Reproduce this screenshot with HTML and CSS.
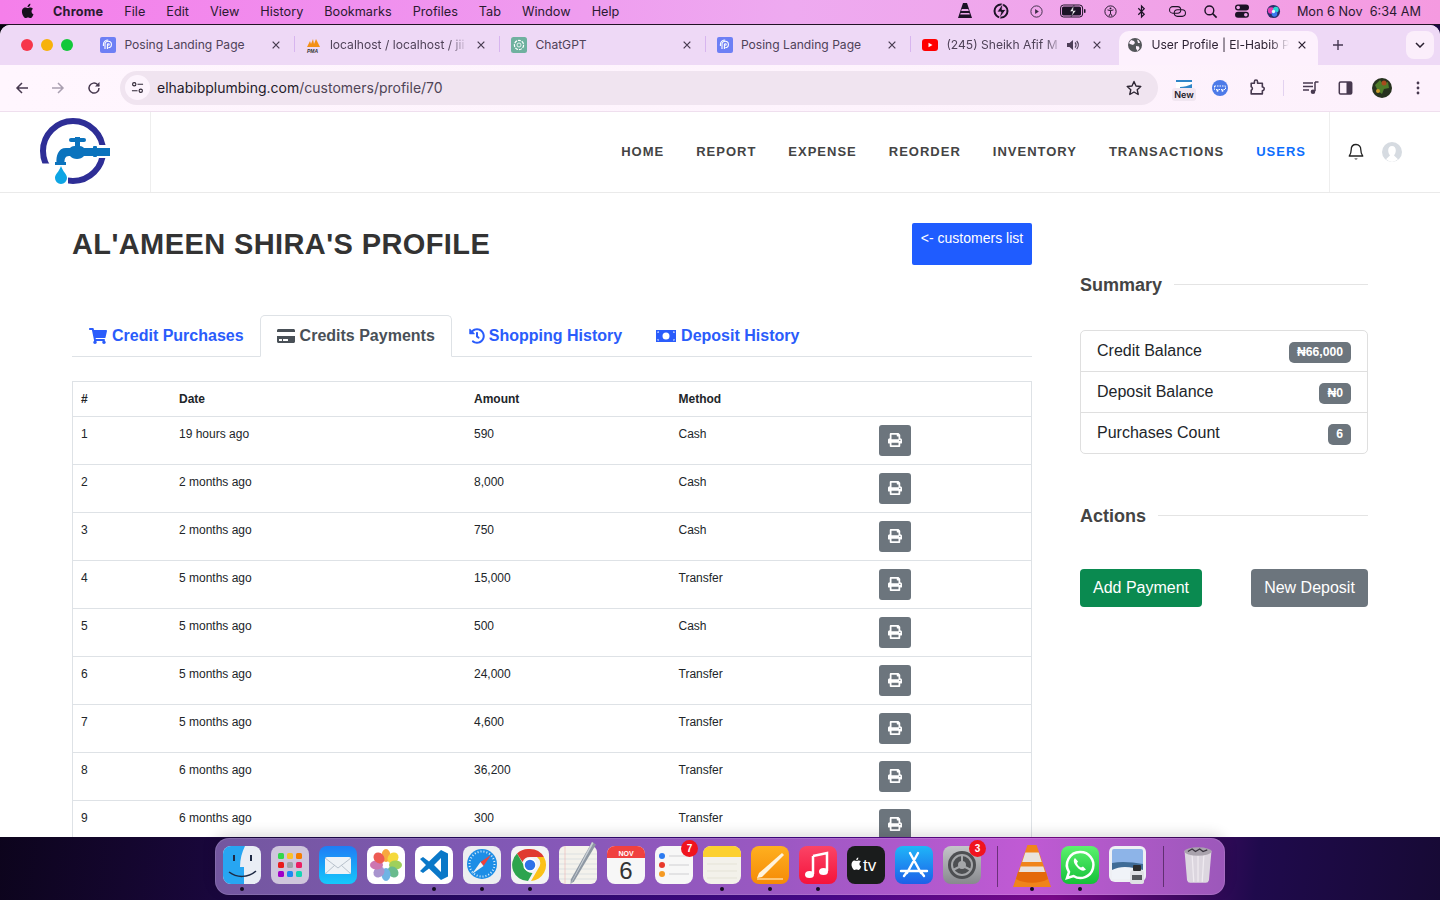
FILE: index.html
```html
<!DOCTYPE html>
<html lang="en">
<head>
<meta charset="utf-8">
<title>User Profile | El-Habib Plumbing</title>
<link rel="stylesheet" href="styles.css">
</head>
<body>
<svg class="defs" width="0" height="0" aria-hidden="true">
  <defs>
    <symbol id="i-print" viewBox="0 0 512 512"><path d="M448 192V77.25c0-8.49-3.37-16.62-9.37-22.63L393.37 9.37c-6-6-14.14-9.37-22.63-9.37H96C78.33 0 64 14.33 64 32v160c-35.35 0-64 28.65-64 64v112c0 8.84 7.16 16 16 16h48v96c0 17.67 14.33 32 32 32h320c17.67 0 32-14.33 32-32v-96h48c8.84 0 16-7.16 16-16V256c0-35.35-28.65-64-64-64zm-64 256H128v-96h256v96zm0-224H128V64h192v48c0 8.84 7.16 16 16 16h48v96zm48 72c-13.25 0-24-10.75-24-24 0-13.26 10.75-24 24-24s24 10.74 24 24c0 13.25-10.75 24-24 24z"/></symbol>
    <symbol id="i-close" viewBox="0 0 12 12"><path d="M2 2l8 8M10 2l-8 8" stroke="currentColor" stroke-width="1.5" fill="none"/></symbol>
    <symbol id="i-posing" viewBox="0 0 16 16"><rect width="16" height="16" rx="2" fill="#6d7ff5"/><path d="M5 12V7.5a3.2 3.2 0 1 1 3.2 3.2M7.4 12V7.6a.9.9 0 1 1 .9.9M3.4 9V7.4A4.8 4.8 0 0 1 8.200 3" fill="none" stroke="#fff" stroke-width="1.100"/></symbol>
  </defs>
</svg>

<header class="menubar">
  <div class="menu-left">
    <svg class="apple" viewBox="0 0 14 16"><path d="M11.500 8.500c0-1.800 1.500-2.600 1.500-2.700-.8-1.200-2.100-1.400-2.600-1.400-1.100-.1-2.100.6-2.700.6-.6 0-1.400-.6-2.300-.6-1.200 0-2.300.7-2.900 1.700-1.300 2.200-.3 5.400.9 7.200.6.900 1.300 1.800 2.300 1.800.9 0 1.200-.6 2.300-.6 1.100 0 1.400.6 2.300.6 1 0 1.600-.9 2.200-1.700.7-1 1-2 1-2.100 0 0-2-.7-2-2.800zM9.700 3.100c.5-.6.800-1.400.7-2.300-.7 0-1.600.5-2.100 1.100-.5.500-.9 1.400-.8 2.200.8.100 1.700-.4 2.200-1z"/></svg>
    <b>Chrome</b><span>File</span><span>Edit</span><span>View</span><span>History</span><span>Bookmarks</span><span>Profiles</span><span>Tab</span><span>Window</span><span>Help</span>
  </div>
  <div class="menu-right">
    <svg class="st st-cone" viewBox="0 0 18 18"><path d="M7 1h4l5 15H2z" fill="#1c1226"/><path d="M5.800 7h6.400l.6 2H5.200zM4.700 11h8.600l.5 1.500H4.200z" fill="#eba6ea"/></svg>
    <svg class="st st-bolt" viewBox="0 0 18 18"><circle cx="9" cy="9" r="6.500" fill="none" stroke="#1c1226" stroke-width="2"/><path d="M11 1L5 10h4l-2 7 7-9.500h-4z" fill="#1c1226" stroke="#efa5ea" stroke-width=".8"/></svg>
    <svg class="st st-play" viewBox="0 0 16 16"><circle cx="8" cy="8" r="6" fill="none" stroke="#3a2c44" stroke-width="1"/><path d="M6.500 5.300l4 2.700-4 2.700z" fill="#3a2c44"/></svg>
    <svg class="st st-batt" viewBox="0 0 26 14"><rect x=".6" y="1" width="22" height="12" rx="3" fill="none" stroke="#1c1226"/><rect x="2" y="2.500" width="19" height="9" rx="1.500" fill="#1c1226"/><path d="M14 1l-4 6.500h3L11 13l5-6.500h-3z" fill="#fff" stroke="#1c1226" stroke-width=".5"/><rect x="24" y="5" width="1.500" height="4" rx=".7" fill="#1c1226"/></svg>
    <svg class="st st-acc" viewBox="0 0 16 16"><circle cx="8" cy="8" r="6" fill="none" stroke="#1c1226"/><circle cx="8" cy="4.700" r="1" fill="#1c1226"/><path d="M4.800 6.300L8 7l3.200-.7M8 7v3M8 10l-1.700 2.800M8 10l1.700 2.800" fill="none" stroke="#1c1226"/></svg>
    <svg class="st st-bt" viewBox="0 0 12 16"><path d="M2.500 4.500l6.500 6.500-3 3V2l3 3-6.500 6.500" fill="none" stroke="#1c1226" stroke-width="1.300"/></svg>
    <svg class="st st-link" viewBox="0 0 20 16"><rect x="1.500" y="2.800" width="12" height="7" rx="3.500" fill="none" stroke="#1c1226" stroke-width="1.100"/><rect x="6.500" y="6.200" width="12" height="7" rx="3.500" fill="none" stroke="#1c1226" stroke-width="1.100"/></svg>
    <svg class="st st-search" viewBox="0 0 16 16"><circle cx="6.800" cy="6.800" r="4.700" fill="none" stroke="#1c1226" stroke-width="1.500"/><path d="M10.300 10.300L14.500 14.500" stroke="#1c1226" stroke-width="1.700"/></svg>
    <svg class="st st-cc" viewBox="0 0 16 16"><rect x="1" y="1.500" width="14" height="6" rx="3" fill="#1c1226"/><rect x="1" y="8.800" width="14" height="6" rx="3" fill="#1c1226"/><circle cx="4.200" cy="4.500" r="1.800" fill="#efa5ea"/><circle cx="11.800" cy="11.800" r="1.800" fill="#efa5ea"/></svg>
    <svg class="st st-siri" viewBox="0 0 16 16"><circle cx="8" cy="8" r="7" fill="#29306b"/><circle cx="5.500" cy="7" r="3.500" fill="#e63bb3"/><circle cx="10.500" cy="6" r="3" fill="#2dd6d3"/><circle cx="9" cy="10.500" r="3" fill="#3a78f0"/><circle cx="8" cy="8" r="1.800" fill="#dff"/></svg>
    <span class="clock">Mon 6 Nov&nbsp; 6:34 AM</span>
  </div>
</header>

<div class="window">
  <div class="tabstrip">
    <div class="lights"><i class="l-red"></i><i class="l-yellow"></i><i class="l-green"></i></div>
    <div class="tab">
      <svg class="fav"><use href="#i-posing"/></svg>
      <span class="tab-title">Posing Landing Page</span>
      <svg class="tab-x"><use href="#i-close"/></svg>
    </div>
    <div class="tab">
      <svg class="fav" viewBox="0 0 16 16"><path d="M1 10L4 4l1 3 2-5 1 5 2-5 2 4 2 4z" fill="#f39016"/><text x="1" y="15.500" class="pma">PMA</text></svg>
      <span class="tab-title tab-fade">localhost / localhost / jii</span>
      <svg class="tab-x"><use href="#i-close"/></svg>
    </div>
    <div class="tab">
      <svg class="fav" viewBox="0 0 16 16"><rect width="16" height="16" rx="2.500" fill="#6fb19f"/><circle cx="8" cy="8" r="4.600" fill="none" stroke="#fff" stroke-width="1.200" stroke-dasharray="3 1"/><circle cx="8" cy="8" r="2" fill="none" stroke="#fff" stroke-width=".8"/></svg>
      <span class="tab-title">ChatGPT</span>
      <svg class="tab-x"><use href="#i-close"/></svg>
    </div>
    <div class="tab">
      <svg class="fav"><use href="#i-posing"/></svg>
      <span class="tab-title">Posing Landing Page</span>
      <svg class="tab-x"><use href="#i-close"/></svg>
    </div>
    <div class="tab tab-last">
      <svg class="fav" viewBox="0 0 16 16"><rect y="2" width="16" height="12" rx="3" fill="#f00"/><path d="M6.500 5.800L10.500 8l-4 2.200z" fill="#fff"/></svg>
      <span class="tab-title tab-fade">(245) Sheikh Afif M</span>
      <svg class="speaker" viewBox="0 0 14 14"><path d="M1 5h2.500L7 2v10L3.500 9H1z" fill="#4c3e57"/><path d="M9 4.500a3.500 3.500 0 0 1 0 5M10.700 3a6 6 0 0 1 0 8" fill="none" stroke="#4c3e57" stroke-width="1.200"/></svg>
      <svg class="tab-x"><use href="#i-close"/></svg>
    </div>
    <div class="tab-active">
      <svg class="globe" viewBox="0 0 14 14"><circle cx="7" cy="7" r="7" fill="#535559"/><path d="M3 2l3 1 1 2-2 2-3-1-1-1zM8 8l3 .5.500 2-2 2.500-1.500-2.500zM9 1.500l2 1 1 2.500-2 0z" fill="#fdf0fd"/></svg>
      <span class="tab-title tab-fade">User Profile | El-Habib P</span>
      <svg class="tab-x tab-x-active"><use href="#i-close"/></svg>
    </div>
    <svg class="plus" viewBox="0 0 12 12"><path d="M6 1v10M1 6h10" stroke="#453852" stroke-width="1.400"/></svg>
    <div class="tab-search"><svg viewBox="0 0 10 6"><path d="M1 1l4 4 4-4" fill="none" stroke="#2a2030" stroke-width="1.500"/></svg></div>
  </div>

  <div class="toolbar">
    <svg class="tb tb-back" viewBox="0 0 14 14"><path d="M13 7H2M7 2L2 7l5 5" fill="none" stroke="#47394f" stroke-width="1.500"/></svg>
    <svg class="tb tb-fwd" viewBox="0 0 14 14"><path d="M1 7h11M7 2l5 5-5 5" fill="none" stroke="#a99fb0" stroke-width="1.500"/></svg>
    <svg class="tb tb-reload" viewBox="0 0 14 14"><path d="M12 7a5 5 0 1 1-1.500-3.500L12 5" fill="none" stroke="#47394f" stroke-width="1.500"/><path d="M12.500 1v4.500H8z" fill="#47394f"/></svg>
    <div class="omnibox">
      <div class="site-info"><svg viewBox="0 0 14 14"><circle cx="3.500" cy="3.500" r="1.800" fill="none" stroke="#2e2634" stroke-width="1.200"/><path d="M7 3.500h6M1 10.500h6" stroke="#2e2634" stroke-width="1.300"/><circle cx="10.500" cy="10.500" r="1.800" fill="none" stroke="#2e2634" stroke-width="1.200"/></svg></div>
      <span class="url"><span class="url-host">elhabibplumbing.com</span><span class="url-path">/customers/profile/70</span></span>
      <svg class="star" viewBox="0 0 16 16"><path d="M8 1.500l2 4.500 4.800.5-3.600 3.200 1 4.800L8 12l-4.200 2.500 1-4.800L1.200 6.500 6 6z" fill="none" stroke="#2e2634" stroke-width="1.400" stroke-linejoin="round"/></svg>
    </div>
    <div class="ext-new"><svg viewBox="0 0 16 9"><rect width="16" height="9" fill="#fff"/><path d="M0 0h16v2H0zM4 7c4 0 8-1 12-3v5H4z" fill="#2f86c8"/></svg><span>New</span></div>
    <svg class="tb tb-ext" viewBox="0 0 16 16"><circle cx="8" cy="8" r="8" fill="#4d7be8"/><path d="M2.500 6h11v3.500h-11z" fill="none" stroke="#fff" stroke-dasharray="1.500 1"/><circle cx="5.500" cy="10.800" r="1" fill="#fff"/><circle cx="10.500" cy="10.800" r="1" fill="#fff"/></svg>
    <svg class="tb tb-puzzle" viewBox="0 0 16 16"><path d="M6 2.500a1.500 1.500 0 0 1 3 0V4h4.500v3.500a1.600 1.600 0 0 1 0 3.500v3H3v-3.500a1.700 1.700 0 0 0 0-3.200V4h3z" fill="none" stroke="#47394f" stroke-width="1.500" stroke-linejoin="round"/></svg>
    <i class="tb-sep"></i>
    <svg class="tb tb-media" viewBox="0 0 16 14"><path d="M0 2h10M0 5.500h10M0 9h6" stroke="#47394f" stroke-width="1.300"/><path d="M12 1v9" stroke="#47394f" stroke-width="1.500"/><path d="M12 1h3.500" stroke="#47394f" stroke-width="1.500"/><circle cx="10" cy="10.800" r="2.300" fill="#47394f"/></svg>
    <svg class="tb tb-side" viewBox="0 0 14 14"><rect x=".8" y="1" width="12.400" height="12" rx="1.300" fill="none" stroke="#47394f" stroke-width="1.500"/><rect x="8" y="1" width="5" height="12" fill="#47394f"/></svg>
    <svg class="tb-avatar" viewBox="0 0 20 20"><circle cx="10" cy="10" r="10" fill="#27321f"/><path d="M3 7l5-5 3 4 5-2 1 6-5 1-2 5-4-3z" fill="#4f7c2a"/><circle cx="12" cy="5" r="2.500" fill="#a84a1e"/><circle cx="6" cy="13" r="2" fill="#c89a2a"/></svg>
    <svg class="tb tb-more" viewBox="0 0 4 14"><circle cx="2" cy="2" r="1.400" fill="#47394f"/><circle cx="2" cy="7" r="1.400" fill="#47394f"/><circle cx="2" cy="12" r="1.400" fill="#47394f"/></svg>
  </div>

  <div class="page">
    <nav class="site-nav">
      <div class="brand">
        <svg class="logo" viewBox="0 0 150 80">
          <circle cx="73" cy="39" r="30" fill="none" stroke="#2e2e96" stroke-width="6"/>
          <rect x="40" y="51.500" width="28" height="21" fill="#fff"/>
          <rect x="98" y="33" width="14" height="13" fill="#fff"/>
          <rect x="69" y="26" width="17" height="4" rx="2" fill="#0b73bd"/>
          <rect x="75" y="25" width="5" height="13" fill="#0b73bd"/>
          <path d="M110 36H84c-2-3-12-3-14 0h-4c-8 0-10 8-9.500 15h8c0-4 .5-7 4.500-7h1c3 4 11 4 14 0h26z" fill="#0b73bd"/>
          <rect x="93" y="34" width="4" height="11" rx="1" fill="#0b73bd"/>
          <rect x="55" y="50" width="11" height="3" fill="#0b73bd"/>
          <path d="M61 54c2 6 6 8 6 12a6 6 0 0 1-12 0c0-4 4-6 6-12z" fill="#0ea5e4"/>
        </svg>
      </div>
      <ul class="nav-links">
        <li>HOME</li><li>REPORT</li><li>EXPENSE</li><li>REORDER</li><li>INVENTORY</li><li>TRANSACTIONS</li><li class="nav-active">USERS</li>
      </ul>
      <div class="nav-user">
        <svg class="bell" viewBox="0 0 16 18"><path d="M8 1.500c-3 0-4.800 2.200-4.800 5.200 0 3.500-1 4.800-2 6.300h13.600c-1-1.500-2-2.800-2-6.300 0-3-1.800-5.200-4.800-5.200z" fill="none" stroke="#222" stroke-width="1.300" stroke-linejoin="round"/><path d="M6.300 15.500a2 2 0 0 0 3.400 0z" fill="#222"/></svg>
        <svg class="user" viewBox="0 0 20 20"><circle cx="10" cy="10" r="10" fill="#d6dbe1"/><path d="M10 4c2.500 0 3.800 2 3.800 4.500 0 2-1 4-1.800 5l4 3.800A10 10 0 0 1 10 20a10 10 0 0 1-6-2.700l4-3.800c-.8-1-1.800-3-1.800-5C6.200 6 7.500 4 10 4z" fill="#fff"/></svg>
      </div>
    </nav>

    <main class="content">
      <section class="main-col">
        <div class="title-row">
          <h1>AL'AMEEN SHIRA'S PROFILE</h1>
          <a class="btn-list">&lt;- customers list</a>
        </div>
        <div class="tabs">
          <a class="ptab ptab-first"><svg class="pi pi-cart" viewBox="0 0 576 512"><path d="M528.12 301.319l47.273-208C578.806 78.301 567.391 64 551.99 64H159.208l-9.166-44.81C147.758 8.021 137.93 0 126.529 0H24C10.745 0 0 10.745 0 24v16c0 13.255 10.745 24 24 24h69.883l70.248 343.435C147.325 417.1 136 435.222 136 456c0 30.928 25.072 56 56 56s56-25.072 56-56c0-15.674-6.447-29.835-16.824-40h209.647C430.447 426.165 424 440.326 424 456c0 30.928 25.072 56 56 56s56-25.072 56-56c0-22.172-12.888-41.332-31.579-50.405l5.517-24.276c3.413-15.018-8.002-29.319-23.403-29.319H218.117l-6.545-32h293.145c11.206 0 20.92-7.754 23.403-18.681z"/></svg>Credit Purchases</a>
          <a class="ptab ptab-active"><svg class="pi pi-card" viewBox="0 0 576 512"><path d="M0 432c0 26.500 21.500 48 48 48h480c26.500 0 48-21.500 48-48V256H0v176zm192-68c0-6.600 5.400-12 12-12h136c6.600 0 12 5.400 12 12v40c0 6.600-5.400 12-12 12H204c-6.600 0-12-5.400-12-12v-40zm-128 0c0-6.600 5.400-12 12-12h72c6.600 0 12 5.400 12 12v40c0 6.600-5.400 12-12 12H76c-6.600 0-12-5.400-12-12v-40zM576 80v48H0V80c0-26.500 21.500-48 48-48h480c26.500 0 48 21.500 48 48z"/></svg>Credits Payments</a>
          <a class="ptab"><svg class="pi pi-hist" viewBox="0 0 512 512"><path d="M504 255.531c.253 136.640-111.180 248.372-247.820 248.468-59.015.042-113.223-20.530-155.822-54.911-11.077-8.940-11.905-25.541-1.839-35.607l11.267-11.267c8.609-8.609 22.353-9.551 31.891-1.984C173.062 425.135 212.781 440 256 440c101.705 0 184-82.311 184-184 0-101.705-82.311-184-184-184-48.814 0-93.149 18.969-126.068 49.932l50.754 50.754c10.080 10.080 2.941 27.314-11.313 27.314H24c-8.837 0-16-7.163-16-16V38.627c0-14.254 17.234-21.393 27.314-11.314l49.372 49.372C129.209 34.136 189.552 8 256 8c136.810 0 247.747 110.780 248 247.531zm-180.912 78.784l9.823-12.630c8.138-10.463 6.253-25.542-4.210-33.679L288 256.349V152c0-13.255-10.745-24-24-24h-16c-13.255 0-24 10.745-24 24v135.651l65.409 50.874c10.463 8.137 25.541 6.253 33.679-4.210z"/></svg>Shopping History</a>
          <a class="ptab"><svg class="pi pi-money" viewBox="0 0 20 14"><path fill-rule="evenodd" d="M0 1h20v12H0zM10 3.500a3.500 3.500 0 1 0 0 7 3.500 3.500 0 0 0 0-7zM1.500 2.500v1.500a1.500 1.500 0 0 0 1.500-1.500zM17 2.500a1.500 1.500 0 0 0 1.500 1.500V2.500zM1.500 10v1.500H3A1.500 1.500 0 0 0 1.500 10zM18.500 10A1.500 1.500 0 0 0 17 11.500h1.500z"/></svg>Deposit History</a>
        </div>
        <div class="table-wrap">
          <table class="pay-table">
            <colgroup><col class="c-num"><col class="c-date"><col class="c-amt"><col class="c-meth"><col></colgroup>
            <thead><tr><th>#</th><th>Date</th><th>Amount</th><th>Method</th><th></th></tr></thead>
            <tbody>
              <tr><td>1</td><td>19 hours ago</td><td>590</td><td>Cash</td><td><a class="btn-print"><svg><use href="#i-print"/></svg></a></td></tr>
              <tr><td>2</td><td>2 months ago</td><td>8,000</td><td>Cash</td><td><a class="btn-print"><svg><use href="#i-print"/></svg></a></td></tr>
              <tr><td>3</td><td>2 months ago</td><td>750</td><td>Cash</td><td><a class="btn-print"><svg><use href="#i-print"/></svg></a></td></tr>
              <tr><td>4</td><td>5 months ago</td><td>15,000</td><td>Transfer</td><td><a class="btn-print"><svg><use href="#i-print"/></svg></a></td></tr>
              <tr><td>5</td><td>5 months ago</td><td>500</td><td>Cash</td><td><a class="btn-print"><svg><use href="#i-print"/></svg></a></td></tr>
              <tr><td>6</td><td>5 months ago</td><td>24,000</td><td>Transfer</td><td><a class="btn-print"><svg><use href="#i-print"/></svg></a></td></tr>
              <tr><td>7</td><td>5 months ago</td><td>4,600</td><td>Transfer</td><td><a class="btn-print"><svg><use href="#i-print"/></svg></a></td></tr>
              <tr><td>8</td><td>6 months ago</td><td>36,200</td><td>Transfer</td><td><a class="btn-print"><svg><use href="#i-print"/></svg></a></td></tr>
              <tr><td>9</td><td>6 months ago</td><td>300</td><td>Transfer</td><td><a class="btn-print"><svg><use href="#i-print"/></svg></a></td></tr>
            </tbody>
          </table>
        </div>
      </section>

      <aside class="side-col">
        <h2 class="side-head side-head-summary"><span>Summary</span><i></i></h2>
        <ul class="summary">
          <li><span>Credit Balance</span><b class="badge">₦66,000</b></li>
          <li><span>Deposit Balance</span><b class="badge">₦0</b></li>
          <li><span>Purchases Count</span><b class="badge">6</b></li>
        </ul>
        <h2 class="side-head side-head-actions"><span>Actions</span><i></i></h2>
        <div class="actions">
          <a class="btn-action btn-green">Add Payment</a>
          <a class="btn-action btn-gray">New Deposit</a>
        </div>
      </aside>
    </main>
  </div>
</div>

<footer class="dock">
  <div class="app dot"><svg viewBox="0 0 38 38"><rect width="38" height="38" rx="8" fill="#e9eef5"/><path d="M8 0h14c-3 6-5 13-5 21h4v17H8a8 8 0 0 1-8-8V8a8 8 0 0 1 8-8z" fill="#27a6f2"/><path d="M11 9v6M28 9v6" stroke="#1d2a44" stroke-width="2"/><path d="M6 26c8 6 19 6 27-1" fill="none" stroke="#1d2a44" stroke-width="1.500"/></svg></div>
  <div class="app"><svg viewBox="0 0 38 38"><rect width="38" height="38" rx="8" fill="#cfc6dc"/><g><rect x="7" y="7" width="6" height="6" rx="1.500" fill="#32d74b"/><rect x="16" y="7" width="6" height="6" rx="1.500" fill="#fbc02d"/><rect x="25" y="7" width="6" height="6" rx="1.500" fill="#f57c00"/><rect x="7" y="16" width="6" height="6" rx="1.500" fill="#e81c1c"/><rect x="16" y="16" width="6" height="6" rx="1.500" fill="#9ea3a8"/><rect x="25" y="16" width="6" height="6" rx="1.500" fill="#ea1e63"/><rect x="7" y="25" width="6" height="6" rx="1.500" fill="#a000c8"/><rect x="16" y="25" width="6" height="6" rx="1.500" fill="#1e88f0"/><rect x="25" y="25" width="6" height="6" rx="1.500" fill="#14d4b4"/></g></svg></div>
  <div class="app"><svg viewBox="0 0 38 38"><defs><linearGradient id="g-mail" x1="0" y1="0" x2="0" y2="1"><stop offset="0" stop-color="#1f7cf5"/><stop offset="1" stop-color="#16c8fb"/></linearGradient></defs><rect width="38" height="38" rx="8" fill="url(#g-mail)"/><rect x="6" y="11" width="26" height="17" rx="2" fill="#eef2f6"/><path d="M6 12l13 10 13-10M6 28l10-9M32 28l-10-9" fill="none" stroke="#b9c2cc"/></svg></div>
  <div class="app"><svg viewBox="0 0 38 38"><rect width="38" height="38" rx="8" fill="#fff"/><g opacity=".85"><ellipse cx="19" cy="9.500" rx="4.500" ry="6.500" fill="#f79a1e"/><ellipse cx="26" cy="12" rx="5" ry="6" fill="#f4d31b" transform="rotate(45 26 12)"/><ellipse cx="28.500" cy="19" rx="6.500" ry="4.500" fill="#8fc83f"/><ellipse cx="26" cy="26" rx="5" ry="6" fill="#4fb07a" transform="rotate(-45 26 26)"/><ellipse cx="19" cy="28.500" rx="4.500" ry="6.500" fill="#56a8e0"/><ellipse cx="12" cy="26" rx="5" ry="6" fill="#9a82c6" transform="rotate(45 12 26)"/><ellipse cx="9.500" cy="19" rx="6.500" ry="4.500" fill="#c55fa4"/><ellipse cx="12" cy="12" rx="5" ry="6" fill="#ea3f36" transform="rotate(-45 12 12)"/></g></svg></div>
  <div class="app dot"><svg viewBox="0 0 38 38"><rect width="38" height="38" rx="8" fill="#fff"/><path d="M26 4l7 3.500v23L26 34 14 22.500 8 27l-3-2 6-6-6-6 3-2 6 4.500zM26 12l-7 7 7 7z" fill="#0a78c8"/></svg></div>
  <div class="app dot"><svg viewBox="0 0 38 38"><rect width="38" height="38" rx="8" fill="#eceef0"/><circle cx="19" cy="18" r="15" fill="#1d8ee6"/><circle cx="19" cy="18" r="12.500" fill="none" stroke="#d6ecfa" stroke-width="2" stroke-dasharray="1 2"/><path d="M28 9L20.500 20 17.500 16z" fill="#f0413a"/><path d="M9 28l8.500-12 3 4z" fill="#f2f4f6"/></svg></div>
  <div class="app dot"><svg viewBox="0 0 38 38"><rect width="38" height="38" rx="8" fill="#f3f3f4"/><path d="M19 3a16 16 0 0 1 13.900 8H19a8 8 0 0 0-7.500 5L6 7.500A16 16 0 0 1 19 3z" fill="#e03a2f"/><path d="M32.900 11A16 16 0 0 1 20 35l7-12a8 8 0 0 0-1-12z" fill="#fbc116"/><path d="M6 7.500l7 12a8 8 0 0 0 8.500 7.500L17 35A16 16 0 0 1 6 7.500z" fill="#2da44e"/><circle cx="19" cy="19" r="6" fill="#2f72e8" stroke="#fff" stroke-width="1.500"/></svg></div>
  <div class="app"><svg class="notepad" viewBox="0 0 38 42"><rect y="4" width="38" height="38" rx="6" fill="#f4f2ec"/><path d="M0 12h38M0 17h38M0 22h38M0 27h38M0 32h38M0 37h38" stroke="#cfd3dc" stroke-width=".6"/><path d="M6 4v38" stroke="#eeb4b4" stroke-width=".6"/><path d="M33 0l4 2.500-22 37-3.500 2.500.3-4.500z" fill="#8e98a3"/><path d="M33 0l1.500 1L13 40l-1.500 2z" fill="#c9d0d6"/></svg></div>
  <div class="app"><svg viewBox="0 0 38 38"><rect width="38" height="38" rx="8" fill="#f7f7f7"/><path d="M0 12V8a8 8 0 0 1 8-8h22a8 8 0 0 1 8 8v4z" fill="#f0413f"/><text x="19" y="9.500" class="cal-m">NOV</text><text x="19" y="33" class="cal-d">6</text></svg></div>
  <div class="app has-badge"><svg viewBox="0 0 38 38"><rect width="38" height="38" rx="8" fill="#f7f7f7"/><circle cx="7" cy="10" r="3" fill="#2d7bf0"/><circle cx="7" cy="19" r="3" fill="#e8392c"/><circle cx="7" cy="28" r="3" fill="#f59a23"/><path d="M14 10h20M14 19h20M14 28h20" stroke="#cfcfd2"/></svg><b class="dock-badge">7</b></div>
  <div class="app dot"><svg viewBox="0 0 38 38"><rect width="38" height="38" rx="8" fill="#f3f1ea"/><path d="M0 11V8a8 8 0 0 1 8-8h22a8 8 0 0 1 8 8v3z" fill="#fcd02f"/><path d="M4 18h30M4 25h30M4 32h30" stroke="#e0dcd0" stroke-width=".7"/></svg></div>
  <div class="app dot"><svg viewBox="0 0 38 38"><defs><linearGradient id="g-pages" x1="0" y1="0" x2="0" y2="1"><stop offset="0" stop-color="#ffb01f"/><stop offset="1" stop-color="#f58a07"/></linearGradient></defs><rect width="38" height="38" rx="8" fill="url(#g-pages)"/><path d="M31 7l2 2-22 22-5 1 2-5z" fill="#fff3dd"/><path d="M6 33h26" stroke="#ffd79a" stroke-width="1.500"/></svg></div>
  <div class="app dot"><svg viewBox="0 0 38 38"><defs><linearGradient id="g-music" x1="0" y1="0" x2="0" y2="1"><stop offset="0" stop-color="#fb4466"/><stop offset="1" stop-color="#f5133b"/></linearGradient></defs><rect width="38" height="38" rx="8" fill="url(#g-music)"/><path d="M14 10l14-3v18" fill="none" stroke="#fff" stroke-width="2.500"/><path d="M14 10v18" stroke="#fff" stroke-width="2.500"/><ellipse cx="10.500" cy="28.500" rx="4.500" ry="3.500" fill="#fff"/><ellipse cx="24.500" cy="25.500" rx="4.500" ry="3.500" fill="#fff"/></svg></div>
  <div class="app"><svg viewBox="0 0 38 38"><rect width="38" height="38" rx="8" fill="#1a1c1c"/><path d="M13.800 15.300c-.8-.6-1.600-.7-2.100-.7-.9 0-1.500.5-2.200.5-.7 0-1.300-.5-2-.5-1.700 0-3 1.700-3 4 0 2.400 1.700 5.400 3 5.400.6 0 1-.5 2-.5s1.300.5 2 .5c1.200 0 2.300-2 2.700-3.400-2.200-1-2.200-3.700-.4-5.300zM11.300 11.500c-1.100.1-2.200 1.200-2 2.700 1.200.1 2.200-1.100 2-2.700z" fill="#fff"/><text x="16" y="25" class="tv">tv</text></svg></div>
  <div class="app"><svg viewBox="0 0 38 38"><defs><linearGradient id="g-store" x1="0" y1="0" x2="0" y2="1"><stop offset="0" stop-color="#1fb6f8"/><stop offset="1" stop-color="#1d5fe8"/></linearGradient></defs><rect width="38" height="38" rx="8" fill="url(#g-store)"/><path d="M15 7l11 20M23 7L12 27M6 25h26M9 30l3-4M29 30l-3-4" stroke="#fff" stroke-width="2.400" stroke-linecap="round" fill="none"/></svg></div>
  <div class="app has-badge"><svg viewBox="0 0 38 38"><defs><linearGradient id="g-set" x1="0" y1="0" x2="0" y2="1"><stop offset="0" stop-color="#c4c6c9"/><stop offset="1" stop-color="#87898d"/></linearGradient></defs><rect width="38" height="38" rx="8" fill="url(#g-set)"/><circle cx="19" cy="19" r="14" fill="#4d4f52"/><circle cx="19" cy="19" r="10" fill="none" stroke="#a4a6a9" stroke-width="2"/><circle cx="19" cy="19" r="4" fill="#a4a6a9"/><path d="M19 9v7M10 24l6-3M28 24l-6-3" stroke="#a4a6a9" stroke-width="2"/></svg><b class="dock-badge">3</b></div>
  <i class="dock-sep"></i>
  <div class="app dot"><svg class="vlc" viewBox="0 0 38 42"><path d="M14.500 0h9L38 42H0z" fill="#f0841a"/><path d="M12.300 7.500h13.400l3 9.500H9.200zM7.700 21.500h22.600l1.700 5.500H6z" fill="#e9e3dc"/><path d="M5 27h28l2 7c-8 5-24 5-32 0z" fill="#e4690a"/></svg></div>
  <div class="app dot"><svg viewBox="0 0 38 38"><defs><linearGradient id="g-wa" x1="0" y1="0" x2="0" y2="1"><stop offset="0" stop-color="#5cf26e"/><stop offset="1" stop-color="#14c038"/></linearGradient></defs><rect width="38" height="38" rx="8" fill="url(#g-wa)"/><path d="M19 6a13 13 0 0 0-11 20l-2 6 6.500-2A13 13 0 1 0 19 6z" fill="none" stroke="#fff" stroke-width="2.500"/><path d="M14 12c-2 2-1.500 5 2 9s7 4.500 9 2.500l-3-3-2 1c-2-1-3.500-2.500-4-4.500l1-1.500z" fill="#fff"/></svg></div>
  <div class="app"><svg viewBox="0 0 38 38"><rect width="37" height="36" rx="6" fill="#eef0f4"/><rect x="3" y="3" width="31" height="30" rx="2" fill="#8db4e8"/><path d="M3 17c9-2 20-1 31 1v15H3z" fill="#3f6b96"/><path d="M3 24c9-5 20-3 31 0v9H3z" fill="#f0f3f8"/><path d="M21 27c0-2 2-3 3-3v-4h8v4c1 0 3 1 3 3v9c0 1-1 2-2 2H23c-1 0-2-1-2-2z" fill="#dfe1e4"/><rect x="24" y="19" width="8" height="6" rx="1" fill="#2b2c2e"/><rect x="23" y="29" width="10" height="5" fill="#55585c"/></svg></div>
  <i class="dock-sep"></i>
  <div class="app"><svg class="trash" viewBox="0 0 38 44"><path d="M3 5h32l-3 35a4 4 0 0 1-4 3H10a4 4 0 0 1-4-3z" fill="#dcd6df"/><path d="M12 10l2 32M19 10v32M26 10l-2 32" stroke="#efeaf0" stroke-width="1.500"/><ellipse cx="19" cy="6" rx="16" ry="5" fill="#a9a3ad"/><path d="M7 6l5-3 4 3 5-3 4 3 5-2" fill="none" stroke="#3b3640" stroke-width="1.500"/></svg></div>
</footer>
</body>
</html>
```

FILE: styles.css
```css
* { box-sizing: border-box; }
html, body { margin: 0; height: 100%; }
body {
  width: 1440px; height: 900px; overflow: hidden;
  display: flex; flex-direction: column;
  font-family: "Liberation Sans", Arial, sans-serif;
  background: linear-gradient(97deg, #07030f 0%, #14062e 15%, #2a0a6a 40%, #47098a 60%, #7b0a8c 75%, #1f0a4c 88%, #170a35 100%);
}
.defs { position: absolute; }
ul { list-style: none; margin: 0; padding: 0; }

/* macOS menu bar */
.menubar {
  height: 25px; flex: none; display: flex; justify-content: space-between; align-items: center;
  padding: 0 19px 2px 20px;
  border-bottom: 1px solid #221226;
  background: linear-gradient(90deg, #f57fea 0%, #f08fee 25%, #eeaaf0 55%, #f0a5ea 75%, #f59ae0 100%);
  font: 12.700px Inter, "Liberation Sans", sans-serif; color: #2a1a30;
}
.menu-left { display: flex; align-items: center; gap: 21px; }
.menu-left b { font-weight: 700; letter-spacing: .2px; }
.apple { width: 14px; height: 16px; fill: #17101c; margin-right: -2px; }
.menu-right { display: flex; align-items: center; }
.st { flex: none; display: block; }
.st-cone { width: 18px; height: 18px; margin-right: 18px; }
.st-bolt { width: 18px; height: 18px; margin-right: 19px; }
.st-play { width: 15px; height: 15px; margin-right: 16px; }
.st-batt { width: 26px; height: 14px; margin-right: 17px; }
.st-acc { width: 15px; height: 15px; margin-right: 18px; }
.st-bt { width: 11px; height: 15px; margin-right: 21px; }
.st-link { width: 19px; height: 15px; margin-right: 16px; }
.st-search { width: 15px; height: 15px; margin-right: 16px; }
.st-cc { width: 16px; height: 16px; margin-right: 16px; }
.st-siri { width: 15px; height: 15px; margin-right: 16px; }
.clock { white-space: nowrap; }

/* browser window */
.window {
  height: 812px; flex: none; display: flex; flex-direction: column; overflow: hidden;
  border-radius: 10px 10px 0 0; background: #fff;
}
.tabstrip { height: 40px; flex: none; display: flex; align-items: flex-end; background: #eed9f6; }
.lights { width: 89.400px; height: 40px; flex: none; display: flex; gap: 8px; padding: 14px 0 0 21px; }
.lights i { width: 12px; height: 12px; border-radius: 50%; display: block; }
.l-red { background: #f6364a; }
.l-yellow { background: #f7b20a; }
.l-green { background: #12c83a; }
.tab {
  width: 205.500px; height: 34px; padding: 0 14px 7px 11px; flex: none;
  display: flex; align-items: center; position: relative;
  font: 12.100px Inter, "Liberation Sans", sans-serif; color: #4f4258;
}
.tab::after { content: ""; position: absolute; right: 0; top: 5px; width: 1px; height: 16px; background: #d7b5ef; }
.tab-last { width: 208px; padding-right: 17px; }
.tab-last::after { display: none; }
.fav { width: 16px; height: 16px; flex: none; margin-right: 8px; }
.pma { font: italic 700 5px "Liberation Sans", sans-serif; fill: #333; }
.tab-title { flex: 1; min-width: 0; white-space: nowrap; }
.tab-fade {
  -webkit-mask-image: linear-gradient(90deg, #000 86%, transparent 100%);
  mask-image: linear-gradient(90deg, #000 86%, transparent 100%);
}
.tab-x { width: 10px; height: 10px; flex: none; color: #4a3e52; margin-left: 8px; }
.speaker { width: 14px; height: 14px; flex: none; margin-left: 4px; margin-right: 4px; }
.tab-active {
  width: 199px; height: 34px; padding: 0 11px 7px 9px; flex: none;
  display: flex; align-items: center; background: #fdf1fd; border-radius: 10px 10px 0 0;
  font: 12.100px Inter, "Liberation Sans", sans-serif; color: #2d2233;
}
.globe { width: 14px; height: 14px; flex: none; margin-right: 9px; }
.tab-x-active { color: #2d2233; }
.plus { width: 12px; height: 12px; margin: 0 0 14px 14px; flex: none; }
.tab-search {
  width: 28px; height: 28px; margin: 0 0 6px 62px; flex: none; border-radius: 8px; background: #fbeefb;
  display: flex; align-items: center; justify-content: center;
}
.tab-search svg { width: 10px; height: 6px; }

.toolbar {
  height: 47px; flex: none; display: flex; align-items: center; padding: 0 0 1px 15px;
  background: linear-gradient(90deg, #fff6fe, #fdf1fc);
  border-bottom: 1px solid #efdfee;
}
.tb { flex: none; display: block; }
.tb-back, .tb-fwd, .tb-reload { width: 14px; height: 14px; margin-right: 22px; }
.tb-reload { margin-right: 19px; }
.omnibox {
  width: 1038px; height: 34px; flex: none; display: flex; align-items: center;
  padding: 0 16px 0 5px; border-radius: 17px; background: #f0e4f0;
}
.site-info {
  width: 25px; height: 25px; border-radius: 50%; background: #fdf4fd; flex: none;
  display: flex; align-items: center; justify-content: center; margin-right: 7px;
}
.site-info svg { width: 13px; height: 13px; }
.url { flex: 1; font: 14px Inter, "Liberation Sans", sans-serif; white-space: nowrap; }
.url-host { color: #241b2a; }
.url-path { color: #4f4456; }
.star { width: 16px; height: 16px; flex: none; }
.ext-new { width: 24px; flex: none; margin: 6px 0 0 14px; display: flex; flex-direction: column; align-items: center; }
.ext-new svg { width: 16px; height: 9px; display: block; margin-bottom: -1px; }
.ext-new span {
  font: 600 9px Inter, "Liberation Sans", sans-serif; color: #241b2a; background: #f1e6f1;
  border-radius: 3px; width: 24px; text-align: center; line-height: 13px;
}
.tb-ext { width: 16px; height: 16px; margin-left: 16px; }
.tb-puzzle { width: 17px; height: 17px; margin-left: 20px; }
.tb-sep { width: 1px; height: 16px; background: #e3d2f0; margin-left: 18px; flex: none; }
.tb-media { width: 16px; height: 14px; margin-left: 19px; }
.tb-side { width: 15px; height: 14px; margin-left: 19px; }
.tb-avatar { width: 20px; height: 20px; flex: none; margin-left: 19px; }
.tb-more { width: 4px; height: 14px; margin-left: 24px; }

/* site */
.page { flex: 1; min-height: 0; overflow: hidden; background: #fff; }
.site-nav { height: 81px; display: flex; align-items: stretch; border-bottom: 1px solid #eaeaea; }
.brand { width: 151px; flex: none; border-right: 1px solid #eeeeee; }
.logo { width: 150px; height: 80px; display: block; }
.nav-links {
  flex: 1; display: flex; align-items: center; justify-content: flex-end; gap: 32px; padding: 0 23px 2px 0;
  font-size: 13px; font-weight: 700; letter-spacing: 1px; color: #444;
}
.nav-active { color: #0d6efd; }
.nav-user {
  width: 111px; flex: none; border-left: 1px solid #eeeeee; display: flex; align-items: center;
  padding-left: 18px; gap: 18px;
}
.bell { width: 16px; height: 18px; }
.user { width: 20px; height: 20px; }

.content { display: flex; gap: 48px; padding: 30px 72px 0; }
.main-col { width: 960px; flex: none; }
.title-row { display: flex; justify-content: space-between; align-items: flex-start; height: 92px; }
h1 { margin: 5px 0 0; font-size: 29px; line-height: 33px; font-weight: 700; letter-spacing: .4px; color: #333; }
.btn-list {
  width: 120px; height: 42px; border-radius: 2px; background: #1f5cff; color: #fff;
  font-size: 14px; font-weight: 400; text-align: center; padding-top: 7px; line-height: 17px;
}
.tabs { display: flex; height: 42px; border-bottom: 1px solid #dee2e6; }
.ptab {
  height: 42px; padding: 0 16px; display: flex; align-items: center; flex: none;
  font-size: 16px; font-weight: 700; color: #2a5cfb; border: 1px solid transparent; border-radius: 5px 5px 0 0;
}
.ptab-first { padding: 0 15px 0 16px; }
.ptab-active { color: #495057; background: #fff; border-color: #dee2e6 #dee2e6 #fff; }
.pi { height: 16px; fill: currentColor; margin-right: 4px; flex: none; }
.pi-cart { width: 18px; margin-right: 5px; }
.pi-card { width: 18px; margin-right: 5px; }
.pi-hist { width: 16px; }
.pi-money { width: 20px; margin-right: 5px; }
.table-wrap { margin-top: 24px; }
.pay-table { width: 960px; table-layout: fixed; border-collapse: collapse; font-size: 12px; color: #212529; border: 1px solid #dee2e6; }
.c-num { width: 98.500px; }
.c-date { width: 295px; }
.c-amt { width: 204.500px; }
.c-meth { width: 200px; }
.pay-table th, .pay-table td { padding: 8px; text-align: left; vertical-align: top; border-bottom: 1px solid #dee2e6; line-height: 18px; }
.pay-table th { height: 35px; font-weight: 700; }
.pay-table td { height: 48px; }
.btn-print {
  width: 32px; height: 31px; padding-bottom: 2px; border-radius: 3px; background: #6c757d; display: flex; align-items: center; justify-content: center;
}
.btn-print svg { width: 14px; height: 14px; fill: #fff; }

.side-col { width: 288px; flex: none; }
.side-head { display: flex; align-items: center; gap: 12px; margin: 0; font-size: 18px; line-height: 22px; font-weight: 700; color: #444; }
.side-head i { flex: 1; height: 1px; background: #e4e4e4; margin-bottom: 2px; }
.side-head-summary { margin-top: 51px; }
.side-head-actions { margin-top: 51px; }
.summary { margin-top: 34px; border: 1px solid #dfdfdf; border-radius: 5px; }
.summary li {
  height: 41px; display: flex; align-items: center; justify-content: space-between; padding: 0 16px;
  font-size: 16px; color: #212529; border-bottom: 1px solid #dfdfdf;
}
.summary li:last-child { border-bottom: 0; height: 40px; }
.summary span { margin-top: -1px; }
.badge { background: #6c757d; color: #fff; font-size: 12.200px; font-weight: 700; border-radius: 5px; padding: 3px 8px; line-height: 15px; margin-top: 2px; }
.actions { margin-top: 42px; display: flex; justify-content: space-between; }
.btn-action { height: 38px; border-radius: 4px; font-size: 16px; line-height: 38px; color: #fff; text-align: center; }
.btn-green { width: 122px; background: #0a8a50; }
.btn-gray { width: 117px; background: #6c757d; }

/* dock */
.dock {
  width: 1010px; height: 57px; margin: 1px auto 0; flex: none; display: flex; align-items: flex-start;
  padding: 8px 0 0 3px; border-radius: 14px; position: relative; z-index: 1;
  background: linear-gradient(90deg, #73579f 0%, #8258b6 30%, #9a58c2 55%, #c05ad4 80%, #9c58ba 100%);
  box-shadow: inset 0 0 0 1px rgba(255,255,255,.12), 0 -4px 14px rgba(0,0,0,.14);
}
.app { width: 48px; height: 38px; flex: none; display: flex; justify-content: center; position: relative; }
.app svg { width: 38px; height: 38px; display: block; flex: none; }
.app svg.vlc { height: 42px; margin-top: -1px; }
.app svg.notepad { height: 42px; margin-top: -4px; }
.app svg.trash { width: 32px; height: 44px; margin-top: -3px; }
.dot::after { content: ""; position: absolute; left: 22px; bottom: -7px; width: 4px; height: 4px; border-radius: 50%; background: #140c22; }
.dock-sep { width: 1px; height: 41px; background: rgba(40,15,50,.55); flex: none; margin: 0 10px 0 11px; }
.cal-m { font: 700 7px "Liberation Sans", sans-serif; fill: #fff; text-anchor: middle; }
.cal-d { font: 400 24px "Liberation Sans", sans-serif; fill: #333; text-anchor: middle; }
.tv { font: 400 17px "Liberation Sans", sans-serif; fill: #fff; }
.dock-badge {
  position: absolute; right: 0; top: -6px; width: 17px; height: 17px; border-radius: 50%;
  background: #f0141e; color: #fff; font: 700 10px/17px "Liberation Sans", sans-serif; text-align: center;
}
```
